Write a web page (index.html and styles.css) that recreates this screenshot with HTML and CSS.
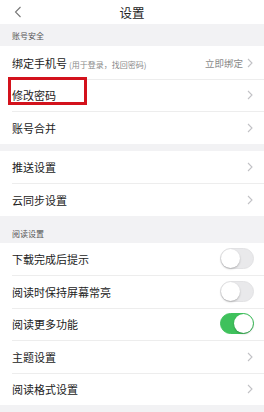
FILE: index.html
```html
<!DOCTYPE html>
<html lang="zh-CN">
<head>
<meta charset="utf-8">
<link rel="stylesheet" href="styles.css">
</head>
<body>
<div class="page">
  <header class="topbar">
    <svg class="back" width="8" height="12" viewBox="0 0 8 12"><path d="M6.5 1 L1.5 6 L6.5 11" fill="none" stroke="#777" stroke-width="1.1"/></svg>
    <h1 class="title">设置</h1>
  </header>

  <div class="band band-first"><span class="band-label">账号安全</span></div>
  <section class="group">
    <div class="row">
      <span class="label">绑定手机号<small class="hint">(用于登录，找回密码)</small></span>
      <span class="value">立即绑定</span>
      <svg class="chev" width="6" height="10" viewBox="0 0 6 10"><path d="M1 1 L5 5 L1 9" fill="none" stroke="#c2c2c6" stroke-width="1.1"/></svg>
    </div>
    <div class="row">
      <span class="label">修改密码</span>
      <svg class="chev" width="6" height="10" viewBox="0 0 6 10"><path d="M1 1 L5 5 L1 9" fill="none" stroke="#c2c2c6" stroke-width="1.1"/></svg>
      <div class="highlight"></div>
    </div>
    <div class="row">
      <span class="label">账号合并</span>
      <svg class="chev" width="6" height="10" viewBox="0 0 6 10"><path d="M1 1 L5 5 L1 9" fill="none" stroke="#c2c2c6" stroke-width="1.1"/></svg>
    </div>
  </section>

  <div class="gap"></div>
  <section class="group">
    <div class="row">
      <span class="label">推送设置</span>
      <svg class="chev" width="6" height="10" viewBox="0 0 6 10"><path d="M1 1 L5 5 L1 9" fill="none" stroke="#c2c2c6" stroke-width="1.1"/></svg>
    </div>
    <div class="row">
      <span class="label">云同步设置</span>
      <svg class="chev" width="6" height="10" viewBox="0 0 6 10"><path d="M1 1 L5 5 L1 9" fill="none" stroke="#c2c2c6" stroke-width="1.1"/></svg>
    </div>
  </section>

  <div class="band band-second"><span class="band-label">阅读设置</span></div>
  <section class="group">
    <div class="row">
      <span class="label">下载完成后提示</span>
      <span class="toggle"><span class="knob"></span></span>
    </div>
    <div class="row">
      <span class="label">阅读时保持屏幕常亮</span>
      <span class="toggle"><span class="knob"></span></span>
    </div>
    <div class="row">
      <span class="label">阅读更多功能</span>
      <span class="toggle on"><span class="knob"></span></span>
    </div>
    <div class="row">
      <span class="label">主题设置</span>
      <svg class="chev" width="6" height="10" viewBox="0 0 6 10"><path d="M1 1 L5 5 L1 9" fill="none" stroke="#c2c2c6" stroke-width="1.1"/></svg>
    </div>
    <div class="row">
      <span class="label">阅读格式设置</span>
      <svg class="chev" width="6" height="10" viewBox="0 0 6 10"><path d="M1 1 L5 5 L1 9" fill="none" stroke="#c2c2c6" stroke-width="1.1"/></svg>
    </div>
  </section>
</div>
</body>
</html>
```
FILE: styles.css
```css
* { box-sizing: border-box; margin: 0; padding: 0; }
html, body {
  width: 264px;
  height: 412px;
  overflow: hidden;
  background: #f2f2f4;
  font-family: "Noto Sans CJK SC", "Noto Sans", sans-serif;
  color: #222;
}
.page { display: flex; flex-direction: column; }
.topbar {
  height: 24px;
  background: #fff;
  display: flex;
  align-items: center;
  justify-content: center;
  position: relative;
}
.back { position: absolute; left: 14px; top: 6px; }
.title { font-size: 12.5px; font-weight: 400; color: #222; line-height: 1; margin-top: 2px; }
.band {
  display: flex;
  align-items: flex-end;
  padding-left: 12px;
}
.band-first { height: 22px; padding-bottom: 6px; }
.band-second { height: 27px; padding-bottom: 5px; }
.band-label { font-size: 8px; color: #555; line-height: 1; }
.gap { height: 7px; }
.group { background: #fff; }
.row {
  position: relative;
  height: 32.5px;
  display: flex;
  align-items: center;
  padding: 2px 11px 0 12px;
}
.row + .row::before {
  content: "";
  position: absolute;
  left: 12px;
  right: 0;
  top: 0;
  height: 1px;
  background: #ededed;
}
.label { font-size: 11px; color: #222; flex: 1; line-height: 1; white-space: nowrap; }
.hint { font-size: 8px; color: #8a8a8a; margin-left: 2px; }
.value { font-size: 9.5px; color: #8a8a8a; margin-right: 4px; line-height: 1; }
.chev { flex: none; margin-top: -1px; }
.toggle {
  width: 34px;
  height: 21px;
  border-radius: 11px;
  background: #e9e9eb;
  border: 1px solid #e2e2e4;
  position: relative;
  margin-right: -1px;
  margin-top: -2px;
}
.knob {
  position: absolute;
  top: 0;
  left: 0;
  width: 19px;
  height: 19px;
  border-radius: 50%;
  background: #fff;
  box-shadow: 0 1px 2px rgba(0,0,0,0.25);
}
.toggle.on { background: #3fc15c; border-color: #3fc15c; }
.toggle.on .knob { left: 13px; }
.highlight {
  position: absolute;
  left: 8px;
  top: -1.5px;
  width: 79px;
  height: 28px;
  border: 3px solid #d3121c;
}
```
